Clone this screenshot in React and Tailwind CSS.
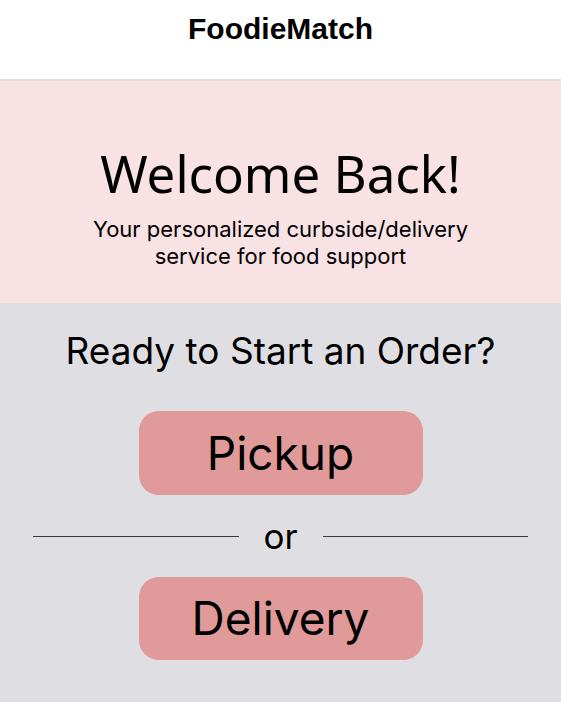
import React from 'react';

export default function App() {
    return (
        <div className="w-full min-h-[702px] flex flex-col bg-[#dfdee3]" style={{ fontFamily: 'Inter, sans-serif' }}>
            <header className="h-[81px] bg-white border-b-2 border-[#e3dfdf] flex justify-center pt-[11px]">
                <h1 className="text-[30px] leading-[36px] font-bold text-black" style={{ fontFamily: '"Liberation Sans", Arial, sans-serif' }}>
                    FoodieMatch
                </h1>
            </header>

            <section className="h-[222px] bg-[#f8e2e3] flex flex-col items-center pt-[62px]">
                <h2 className="text-[51px] leading-[60px] text-black" style={{ fontFamily: '"Noto Sans", sans-serif' }}>
                    Welcome Back!
                </h2>
                <p className="mt-[13px] text-[22px] leading-[27px] text-center text-black">
                    Your personalized curbside/delivery<br />service for food support
                </p>
            </section>

            <section className="flex flex-col items-center pt-[26px] pb-[43px]">
                <h3 className="text-[37px] leading-[44px] text-black">Ready to Start an Order?</h3>

                <button className="mt-[38px] w-[284px] h-[84px] rounded-[20px] bg-[#df9a99] text-[46px] text-black">
                    Pickup
                </button>

                <div className="w-full flex items-center px-[33px] my-[21px]">
                    <div className="flex-1 h-px bg-[#3a3a3a]"></div>
                    <span className="w-[84px] text-center text-[35px] leading-[40px] text-black">or</span>
                    <div className="flex-1 h-px bg-[#3a3a3a]"></div>
                </div>

                <button className="w-[284px] h-[83px] rounded-[20px] bg-[#df9a99] text-[46px] text-black">
                    Delivery
                </button>
            </section>
        </div>
    );
}
